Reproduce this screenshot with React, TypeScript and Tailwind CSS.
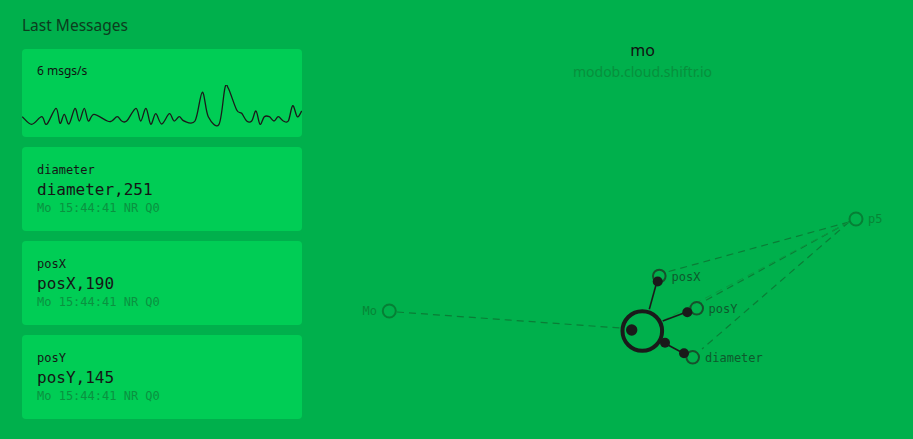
import React from "react";

const pts: [number, number][] = [
  [22.3, 116.7], [31.7, 124.3], [41.7, 116.7], [46.7, 124.3], [56, 108.3], [60, 123.3],
  [64.3, 114.3], [69, 124], [75, 108.3], [79.3, 121], [84.3, 108.3], [88.3, 121],
  [94, 114.3], [107.3, 121], [111.7, 121], [117.3, 116.7], [121.7, 121], [126.7, 121],
  [136, 108.3], [140.7, 121], [146, 108.3], [150.7, 124.3], [155.7, 113.7], [161.7, 124],
  [169.3, 113.7], [174, 121], [179.3, 116.7], [184, 121], [195, 121], [202.3, 92.3],
  [208.3, 116.7], [219, 124.3], [225, 87.7], [228.3, 88.3], [236.7, 110], [241.7, 113.3],
  [246.7, 121], [251.7, 121], [256, 111], [260, 124.3], [264.3, 116.7], [269.3, 116.7],
  [274, 121], [278.3, 116.7], [283.3, 121], [288.3, 121], [292.7, 105.7], [297.3, 116.7],
  [301.7, 111],
];

function smooth(p: [number, number][]): string {
  let d = `M${p[0][0]},${p[0][1]}`;
  for (let i = 0; i < p.length - 1; i++) {
    const p0 = p[i - 1] || p[i];
    const p1 = p[i];
    const p2 = p[i + 1];
    const p3 = p[i + 2] || p2;
    const t = 1 / 6;
    const c1x = p1[0] + (p2[0] - p0[0]) * t;
    const c1y = p1[1] + (p2[1] - p0[1]) * t;
    const c2x = p2[0] - (p3[0] - p1[0]) * t;
    const c2y = p2[1] - (p3[1] - p1[1]) * t;
    d += ` C${c1x.toFixed(1)},${c1y.toFixed(1)} ${c2x.toFixed(1)},${c2y.toFixed(1)} ${p2[0]},${p2[1]}`;
  }
  return d;
}

const msgs = [
  { t: "diameter", v: "diameter,251" },
  { t: "posX", v: "posX,190" },
  { t: "posY", v: "posY,145" },
];

const mono = { fontFamily: '"DejaVu Sans Mono", monospace' };

export default function App() {
  return (
    <div
      className="relative w-[913px] h-[439px] bg-[#00b04c] overflow-hidden flex"
      style={{ fontFamily: '"Noto Sans", sans-serif' }}
    >
      <svg className="absolute left-0 top-0" width={913} height={439}>
        {/* dashed edges */}
        <g stroke="#0a7d36" strokeWidth={1.2} strokeDasharray="7 5" fill="none">
          <line x1={397} y1={312} x2={620} y2={328} />
          <line x1={849} y1={222} x2={667} y2={272} />
          <line x1={849} y1={222} x2={701} y2={303} />
          <line x1={849} y1={222} x2={702} y2={349} />
        </g>
        <line x1={849} y1={222} x2={664} y2={320} stroke="#0a9a40" strokeWidth={1} strokeDasharray="7 5" />
        {/* faint nodes */}
        <circle cx={389.3} cy={311} r={6.5} fill="none" stroke="#067f35" strokeWidth={2} />
        <circle cx={856} cy={219} r={6.5} fill="none" stroke="#067f35" strokeWidth={2} />
        {/* solid edges */}
        <g stroke="#1a1a1a" strokeWidth={1.6}>
          <line x1={649.3} y1={309.3} x2={656} y2={285} />
          <line x1={662.7} y1={321} x2={684} y2={313} />
          <line x1={668} y1={345} x2={682} y2={352.5} />
        </g>
        {/* leaf rings */}
        <g fill="none" stroke="#17502c" strokeWidth={2}>
          <circle cx={659.3} cy={276} r={6.3} />
          <circle cx={696.7} cy={308.3} r={6.3} />
          <circle cx={692.7} cy={357.3} r={6.3} />
        </g>
        <g fill="#1a1a1a">
          <circle cx={657.7} cy={281.5} r={5} />
          <circle cx={687.3} cy={312.3} r={5} />
          <circle cx={684} cy={353.3} r={5} />
          <circle cx={665} cy={342.7} r={5} />
          <circle cx={631.7} cy={330} r={5.7} />
        </g>
        <circle cx={642.3} cy={331} r={19.8} fill="none" stroke="#1a1a1a" strokeWidth={4} />
        <g style={mono} fontSize={12}>
          <text x={362.5} y={315} fill="#078536">Mo</text>
          <text x={868} y={223} fill="#078536">p5</text>
          <text x={671.5} y={281} fill="#0e5a2c">posX</text>
          <text x={708.5} y={312.5} fill="#0e5a2c">posY</text>
          <text x={705} y={361.5} fill="#0e5a2c">diameter</text>
        </g>
      </svg>

      <div className="relative w-[372px] pl-[22px] pt-[13px] flex flex-col">
        <div className="h-[24px] leading-[24px] text-[15.5px] text-[#0c3d1e]">Last Messages</div>
        <div className="mt-[12px] w-[280px] flex flex-col gap-[10px]">
          <div className="h-[88px] rounded-sm bg-[#00cd55] pt-[14px] flex flex-col">
            <div className="pl-[15px] text-[12px] leading-[16px] text-[#111]">6 msgs/s</div>
            <svg className="mt-auto block" width={280} height={52}>
              <path
                d={smooth(pts.map(([x, y]) => [x - 22, y - 85] as [number, number]))}
                fill="none"
                stroke="#1a1a1a"
                strokeWidth={1.3}
                strokeLinejoin="round"
              />
            </svg>
          </div>
          {msgs.map((m) => (
            <div key={m.t} className="h-[84px] rounded-sm bg-[#00cd55] pl-[15px] pt-[15px] flex flex-col" style={mono}>
              <div className="text-[12px] leading-[16px] text-[#151515]">{m.t}</div>
              <div className="mt-[2px] text-[16px] leading-[20px] text-[#151515]">{m.v}</div>
              <div className="mt-[0px] text-[12px] leading-[16px] text-[#0a9140]">Mo 15:44:41 NR Q0</div>
            </div>
          ))}
        </div>
      </div>
      <div className="relative flex-1 pt-[38px] flex flex-col items-center">
        <div className="text-[16px] leading-[24px] text-[#111]">mo</div>
        <div className="text-[14px] leading-[20px] text-[#078f3c]">modob.cloud.shiftr.io</div>
      </div>
    </div>
  );
}
